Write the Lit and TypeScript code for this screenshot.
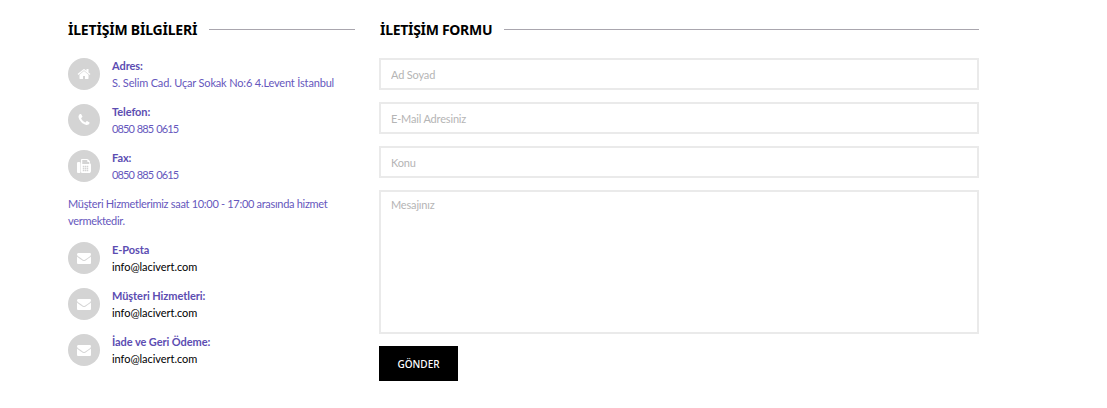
import { css, html, LitElement, svg } from 'lit';
import { customElement } from 'lit/decorators.js';

const icon = (d: unknown, size = 14) =>
  html`<svg viewBox="0 0 1792 1792" width=${size} height=${size} fill="#fff">${d}</svg>`;

const homeIcon = icon(svg`<path d="M1472 992v480q0 26-19 45t-45 19h-384v-384h-256v384h-384q-26 0-45-19t-19-45v-480q0-1 .5-3t.5-3l575-474 575 474q1 2 1 6zm223-69l-62 74q-8 9-21 11h-3q-13 0-21-7l-692-577-692 577q-12 8-24 7-13-2-21-11l-62-74q-8-10-7-23.5t11-21.5l719-599q32-26 76-26t76 26l244 204v-195q0-14 9-23t23-9h192q14 0 23 9t9 23v408l219 182q10 8 11 21.5t-7 23.5z"/>`);
const phoneIcon = icon(svg`<path d="M1600 1240q0 27-10 70.5t-21 68.5q-21 50-122 106-94 51-186 51-27 0-53-3.5t-57.5-12.5-47-14.5-55.5-20.5-49-18q-98-35-175-83-127-79-264-216t-216-264q-48-77-83-175-3-9-18-49t-20.5-55.5-14.5-47-12.5-57.5-3.5-53q0-92 51-186 56-101 106-122 25-11 68.5-21t70.5-10q14 0 21 3 18 6 53 76 11 19 30 54t35 63.5 31 53.5q3 4 17.5 25t21.5 35.5 7 28.5q0 20-28.5 50t-62 55-62 53-28.5 46q0 9 5 22.5t8.5 20.5 14 24 11.5 19q76 137 174 235t235 174q2 1 19 11.5t24 14 20.5 8.5 22.5 5q18 0 46-28.5t53-62 55-62 50-28.5q14 0 28.5 7t35.5 21.5 25 17.5q25 15 53.5 31t63.5 35 54 30q70 35 76 53 3 7 3 21z"/>`);
const faxIcon = icon(svg`<path d="M288 384q66 0 113 47t47 113v1088q0 66-47 113t-113 47h-128q-66 0-113-47t-47-113v-1088q0-66 47-113t113-47h128zm1376 163q58 34 93 93t35 128v768q0 106-75 181t-181 75h-864q-66 0-113-47t-47-113v-1536q0-40 28-68t68-28h672q40 0 88 20t76 48l152 152q28 28 48 76t20 88v163zm-736 989v-128q0-14-9-23t-23-9h-128q-14 0-23 9t-9 23v128q0 14 9 23t23 9h128q14 0 23-9t9-23zm0-256v-128q0-14-9-23t-23-9h-128q-14 0-23 9t-9 23v128q0 14 9 23t23 9h128q14 0 23-9t9-23zm0-256v-128q0-14-9-23t-23-9h-128q-14 0-23 9t-9 23v128q0 14 9 23t23 9h128q14 0 23-9t9-23zm256 512v-128q0-14-9-23t-23-9h-128q-14 0-23 9t-9 23v128q0 14 9 23t23 9h128q14 0 23-9t9-23zm0-256v-128q0-14-9-23t-23-9h-128q-14 0-23 9t-9 23v128q0 14 9 23t23 9h128q14 0 23-9t9-23zm0-256v-128q0-14-9-23t-23-9h-128q-14 0-23 9t-9 23v128q0 14 9 23t23 9h128q14 0 23-9t9-23zm256 512v-128q0-14-9-23t-23-9h-128q-14 0-23 9t-9 23v128q0 14 9 23t23 9h128q14 0 23-9t9-23zm0-256v-128q0-14-9-23t-23-9h-128q-14 0-23 9t-9 23v128q0 14 9 23t23 9h128q14 0 23-9t9-23zm0-256v-128q0-14-9-23t-23-9h-128q-14 0-23 9t-9 23v128q0 14 9 23t23 9h128q14 0 23-9t9-23zm128-384v-256h-160q-40 0-68-28t-28-68v-160h-640v512h896z"/>`);
const mailIcon = icon(svg`<path d="M1792 710v794q0 66-47 113t-113 47h-1472q-66 0-113-47t-47-113v-794q44 49 101 87 362 246 497 345 57 42 92.5 65.5t94.5 48 110 24.5h2q51 0 110-24.5t94.5-48 92.5-65.5q170-123 498-345 57-39 100-87zm0-294q0 79-49 151t-122 123q-376 261-468 325-10 7-42.5 30.5t-54 38-52 32.5-57.5 27-50 9h-2q-23 0-50-9t-57.5-27-52-32.5-54-38-42.5-30.5q-91-64-262-182.5t-205-142.5q-62-42-117-115.5t-55-136.5q0-78 41.5-130t118.5-52h1472q65 0 112.5 47t47.5 113z"/>`);

@customElement('app-root')
export class AppRoot extends LitElement {
  static override styles = css`
    :host {
      display: block;
      box-sizing: border-box;
      width: 1107px;
      height: 408px;
      background: #fff;
      font-family: 'Lato', 'Noto Sans', sans-serif;
      font-size: 11px;
      letter-spacing: -0.17px;
      overflow: hidden;
    }

    .page {
      display: grid;
      grid-template-columns: 287px 600px;
      column-gap: 24px;
      padding: 19px 0 0 68px;
    }

    .heading {
      display: flex;
      align-items: center;
      gap: 12px;
      height: 20px;
      margin-bottom: 19px;
      color: #000;
      font-family: 'Noto Sans', sans-serif;
      font-weight: 700;
      font-size: 14px;
      letter-spacing: -0.2px;
      white-space: nowrap;
    }

    .heading::after {
      content: '';
      flex: 1;
      height: 1px;
      background: #a9a6ae;
    }

    .form-title {
      padding-left: 1px;
      letter-spacing: -0.3px;
    }

    .row {
      display: flex;
      gap: 12px;
      height: 32px;
      margin-bottom: 14px;
    }

    .circle {
      flex: none;
      display: flex;
      align-items: center;
      justify-content: center;
      width: 32px;
      height: 32px;
      border-radius: 50%;
      background: #d4d4d4;
    }

    .text {
      margin-top: -1px;
    }

    .label,
    .value {
      line-height: 17px;
      white-space: nowrap;
    }

    .label {
      color: #5c4db2;
      font-weight: 700;
      letter-spacing: -0.07px;
    }

    .value {
      color: #6657bd;
    }

    .value.tel {
      letter-spacing: -0.9px;
      word-spacing: 1px;
    }

    .value.dark {
      color: #000;
      letter-spacing: -0.05px;
    }

    .note {
      margin: -1px 0 13px;
      color: #6657bd;
      line-height: 17px;
      letter-spacing: -0.3px;
    }

    form {
      display: flex;
      flex-direction: column;
      align-items: flex-start;
    }

    input,
    textarea {
      box-sizing: border-box;
      display: block;
      width: 100%;
      margin: 0 0 12px;
      padding: 0 10px;
      border: 2px solid #eaeaea;
      border-radius: 0;
      outline: 0;
      resize: none;
      background: #fff;
      font: inherit;
      letter-spacing: inherit;
    }

    input {
      height: 32px;
    }

    textarea {
      height: 144px;
      padding-top: 6px;
    }

    input::placeholder,
    textarea::placeholder {
      color: #b5b5b5;
      opacity: 1;
    }

    button {
      width: 79px;
      height: 35px;
      border: 0;
      background: #000;
      color: #fff;
      font-family: 'Noto Sans', sans-serif;
      font-weight: 500;
      font-size: 10px;
      letter-spacing: 0;
    }
  `;

  private _row(icon: unknown, label: string, value: string, kind = '') {
    return html`
      <div class="row">
        <div class="circle">${icon}</div>
        <div class="text">
          <div class="label">${label}</div>
          <div class="value ${kind}">${value}</div>
        </div>
      </div>
    `;
  }

  override render() {
    return html`
      <div class="page">
        <section>
          <div class="heading">İLETİŞİM BİLGİLERİ</div>
          ${this._row(homeIcon, 'Adres:', 'S. Selim Cad. Uçar Sokak No:6 4.Levent İstanbul')}
          ${this._row(phoneIcon, 'Telefon:', '0850 885 0615', 'tel')}
          ${this._row(faxIcon, 'Fax:', '0850 885 0615', 'tel')}
          <p class="note">Müşteri Hizmetlerimiz saat 10:00 - 17:00 arasında hizmet vermektedir.</p>
          ${this._row(mailIcon, 'E-Posta', 'info@lacivert.com', 'dark')}
          ${this._row(mailIcon, 'Müşteri Hizmetleri:', 'info@lacivert.com', 'dark')}
          ${this._row(mailIcon, 'İade ve Geri Ödeme:', 'info@lacivert.com', 'dark')}
        </section>
        <section>
          <div class="heading form-title">İLETİŞİM FORMU</div>
          <form>
            <input placeholder="Ad Soyad" />
            <input placeholder="E-Mail Adresiniz" />
            <input placeholder="Konu" />
            <textarea placeholder="Mesajınız"></textarea>
            <button type="button">GÖNDER</button>
          </form>
        </section>
      </div>
    `;
  }
}
